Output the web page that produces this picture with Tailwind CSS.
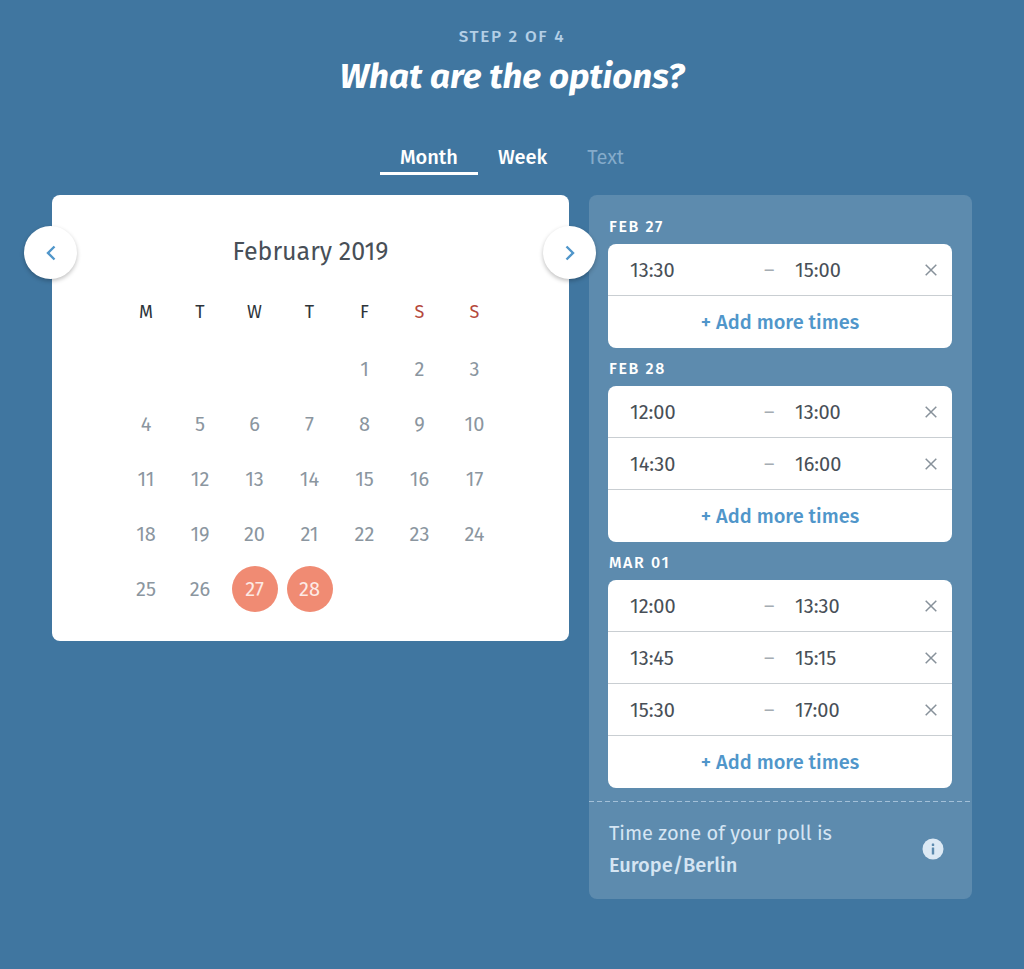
<!DOCTYPE html>
<html lang="en">
<head>
  <meta charset="UTF-8">
  <meta name="viewport" content="width=device-width, initial-scale=1.0">
  <title>Create a poll - Step 2 of 4</title>
  <script src="https://cdn.jsdelivr.net/npm/@tailwindcss/browser@4"></script>
</head>
<body class="min-h-screen bg-[#4076a0] font-['Fira_Sans','Noto_Sans',sans-serif] text-xl text-[#484f57]">
  <header class="pt-[25px] text-center">
    <p class="text-[17px] leading-6 font-medium tracking-widest text-[#b4cfe6]">STEP 2 OF 4</p>
    <h1 class="mt-[3px] text-[35px] leading-12 font-bold italic text-white">What are the options?</h1>
  </header>

  <nav class="mt-[41px] flex justify-center text-white">
    <button class="h-[34px] border-b-3 border-white px-5 font-medium">Month</button>
    <button class="h-[34px] border-b-3 border-transparent px-5 font-medium">Week</button>
    <button class="h-[34px] border-b-3 border-transparent px-5 text-[#85abca]">Text</button>
  </nav>

  <main class="mt-5 grid grid-cols-[517fr_383fr] items-start gap-5 px-[52px]">
    <section class="relative rounded-lg bg-white pt-[37px] pb-[25px]">
      <button aria-label="Previous month" class="absolute top-[31px] -left-7 flex size-[53px] items-center justify-center rounded-full bg-white text-[#5096ca] shadow-[0_2px_4px_rgba(0,0,0,0.25)]">
        <svg class="h-4 w-3" viewBox="0 0 12 16" fill="none" stroke="currentColor" stroke-width="2.4"><path d="M9.5 1.5L3 8l6.5 6.5"/></svg>
      </button>
      <button aria-label="Next month" class="absolute top-[31px] -right-[27px] flex size-[53px] items-center justify-center rounded-full bg-white text-[#5096ca] shadow-[0_2px_4px_rgba(0,0,0,0.25)]">
        <svg class="h-4 w-3" viewBox="0 0 12 16" fill="none" stroke="currentColor" stroke-width="2.4"><path d="M2.5 1.5L9 8l-6.5 6.5"/></svg>
      </button>
      <h2 class="text-center text-[25px] leading-10">February 2019</h2>
      <table class="mx-auto mt-[11px] text-center">
        <thead>
          <tr class="h-[58px] text-lg text-[#2e343a]">
            <th class="w-[54px] font-normal">M</th>
            <th class="w-[54px] font-normal">T</th>
            <th class="w-[55px] font-normal">W</th>
            <th class="w-[55px] font-normal">T</th>
            <th class="w-[55px] font-normal">F</th>
            <th class="w-[55px] font-normal text-[#b5483c]">S</th>
            <th class="w-[55px] font-normal text-[#b5483c]">S</th>
          </tr>
        </thead>
        <tbody id="days" class="text-[#8b969f]"></tbody>
      </table>
    </section>

    <aside class="rounded-lg bg-[#5d8bae]">
      <div id="slots" class="pt-[11px] pr-5 pb-[13px] pl-[19px]"></div>
      <svg class="block h-px w-full" aria-hidden="true"><line x1="0" y1="0.5" x2="100%" y2="0.5" stroke="#a3c0d8" stroke-width="1" stroke-dasharray="5 3"/></svg>
      <div class="flex items-center justify-between pt-[15px] pr-7 pb-[18px] pl-5 text-[#d5e5f3]">
        <p class="leading-8">Time zone of your poll is<br><strong class="font-medium">Europe/Berlin</strong></p>
        <button aria-label="About time zones">
          <svg class="size-[22px]" viewBox="0 0 22 22"><circle cx="11" cy="11" r="10.5" fill="#dce9f4"/><rect x="9.8" y="5.5" width="2.4" height="2.4" rx=".5" fill="#5d8bae"/><rect x="9.8" y="9.5" width="2.4" height="7" rx=".3" fill="#5d8bae"/></svg>
        </button>
      </div>
    </aside>
  </main>

  <script>
    const selected = [27, 28];
    const firstDay = 4; // Feb 1st 2019 is a Friday

    const slots = [
      { day: 'FEB 27', times: [['13:30', '15:00']] },
      { day: 'FEB 28', times: [['12:00', '13:00'], ['14:30', '16:00']] },
      { day: 'MAR 01', times: [['12:00', '13:30'], ['13:45', '15:15'], ['15:30', '17:00']] }
    ];

    let rows = '';
    for (let week = 0; week < 5; week++) {
      rows += '<tr class="h-[55px]">';
      for (let i = 0; i < 7; i++) {
        const day = week * 7 + i - firstDay + 1;
        if (day < 1 || day > 28) {
          rows += '<td></td>';
        } else if (selected.includes(day)) {
          rows += `<td><button aria-pressed="true" class="size-[46px] rounded-full bg-[#f08b73] align-middle text-[#fdeae5]">${day}</button></td>`;
        } else {
          rows += `<td><button aria-pressed="false" class="size-[46px] rounded-full align-middle">${day}</button></td>`;
        }
      }
      rows += '</tr>';
    }
    document.getElementById('days').innerHTML = rows;

    document.getElementById('slots').innerHTML = slots.map(slot => `
      <h3 class="flex h-[38px] items-center pt-[3px] pl-px text-base font-medium tracking-widest text-white">${slot.day}</h3>
      <div class="overflow-hidden rounded-lg bg-white">
        ${slot.times.map(([from, to]) => `
          <div class="grid h-[52px] grid-cols-[134fr_31fr_126fr_20px] items-center border-b border-[#c9ced2] pr-[11px] pl-[22px]">
            <input type="text" aria-label="${slot.day} start" value="${from}" class="w-full min-w-0">
            <span class="text-[#a5acb2]">–</span>
            <input type="text" aria-label="${slot.day} end" value="${to}" class="w-full min-w-0">
            <button aria-label="Remove ${from} - ${to}" class="flex size-5 items-center justify-center text-[#87919a]">
              <svg class="size-3" viewBox="0 0 12 12" fill="none" stroke="currentColor" stroke-width="1.5"><path d="M.7.7l10.600 10.600M11.300.7L.7 11.300"/></svg>
            </button>
          </div>`).join('')}
        <button class="block h-[52px] w-full font-medium text-[#5096ca]">+ Add more times</button>
      </div>`).join('');
  </script>
</body>
</html>
